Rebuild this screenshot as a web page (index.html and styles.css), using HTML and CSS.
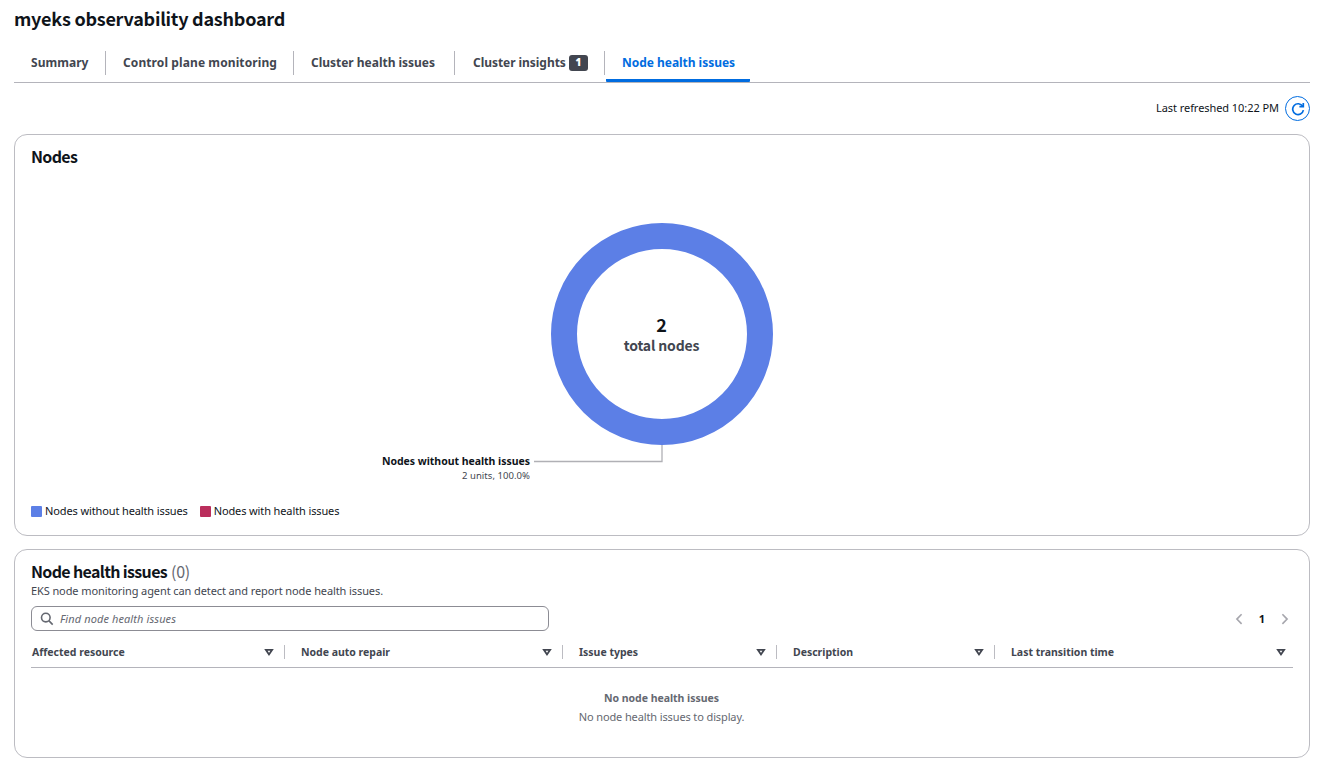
FILE: index.html
```html
<!DOCTYPE html>
<html lang="en">
<head>
    <meta charset="UTF-8">
    <meta name="viewport" content="width=device-width, initial-scale=1.0">
    <title>myeks observability dashboard</title>
    <link rel="stylesheet" href="styles.css">
</head>
<body>
    <main class="page">
        <h1 class="title">myeks observability dashboard</h1>

        <nav class="tabs">
            <a class="tab tab-summary">Summary</a>
            <a class="tab tab-control">Control plane monitoring</a>
            <a class="tab tab-cluster">Cluster health issues</a>
            <a class="tab tab-insights"><span>Cluster insights</span><b class="badge">1</b></a>
            <a class="tab tab-nodes">Node health issues</a>
        </nav>

        <div class="refresh">
            <span class="refresh-text">Last refreshed 10:22 PM</span>
            <button class="refresh-button" aria-label="Refresh">
                <svg width="14" height="14" viewBox="0 0 14 14">
                    <path d="M12.4 8.2A5.4 5.4 0 1 1 11.7 4.3" />
                    <path d="M12.3 0.9V4.7H8.4" />
                </svg>
            </button>
        </div>

        <section class="card nodes-card">
            <h2 class="card-title">Nodes</h2>
            <div class="chart">
                <svg class="donut" width="224" height="242" viewBox="0 0 224 242">
                    <circle cx="112" cy="112" r="98" />
                    <path d="M112 223V239.5H-16" />
                </svg>
                <div class="donut-center">
                    <strong class="total">2</strong>
                    <span class="total-label">total nodes</span>
                </div>
                <div class="donut-label">
                    <strong>Nodes without health issues</strong>
                    <span class="label-value">2 units, 100.0%</span>
                </div>
            </div>
            <div class="legend">
                <div class="legend-item"><i class="marker blue"></i><span>Nodes without health issues</span></div>
                <div class="legend-item"><i class="marker red"></i><span>Nodes with health issues</span></div>
            </div>
        </section>

        <section class="card issues-card">
            <h2 class="card-title">Node health issues <span class="count">(0)</span></h2>
            <p class="description">EKS node monitoring agent can detect and report node health issues.</p>
            <div class="tools">
                <div class="search">
                    <svg width="14" height="14" viewBox="0 0 14 14">
                        <circle cx="5.8" cy="5.6" r="4.3" />
                        <path d="M9 8.9L12.7 12.6" />
                    </svg>
                    <span>Find node health issues</span>
                </div>
                <div class="pagination">
                    <svg width="8" height="12" viewBox="0 0 8 12"><path d="M6.6 1.3L1.9 6.1L6.6 10.9" /></svg>
                    <span>1</span>
                    <svg width="8" height="12" viewBox="0 0 8 12"><path d="M1.4 1.3L6.1 6.1L1.4 10.9" /></svg>
                </div>
            </div>
            <div class="table-head">
                <div class="th">Affected resource<svg width="10" height="8" viewBox="0 0 10 8"><path d="M1.9 1.8H8.1L5 6.4Z" /></svg></div>
                <div class="th">Node auto repair<svg width="10" height="8" viewBox="0 0 10 8"><path d="M1.9 1.8H8.1L5 6.4Z" /></svg></div>
                <div class="th">Issue types<svg width="10" height="8" viewBox="0 0 10 8"><path d="M1.9 1.8H8.1L5 6.4Z" /></svg></div>
                <div class="th">Description<svg width="10" height="8" viewBox="0 0 10 8"><path d="M1.9 1.8H8.1L5 6.4Z" /></svg></div>
                <div class="th">Last transition time<svg width="10" height="8" viewBox="0 0 10 8"><path d="M1.9 1.8H8.1L5 6.4Z" /></svg></div>
            </div>
            <div class="empty">
                <strong>No node health issues</strong>
                <span>No node health issues to display.</span>
            </div>
        </section>
    </main>
</body>
</html>
```
FILE: styles.css
```css
* {
    box-sizing: border-box;
}
body {
    margin: 0;
    background: #fff;
    color: #0f141a;
    font-family: "Noto Sans", "Open Sans", sans-serif;
    font-size: 11px;
    letter-spacing: -0.12px;
    overflow: hidden;
}
h1, h2, .total, .total-label {
    font-family: "Noto Sans CJK JP", "Noto Sans", sans-serif;
    font-weight: 700;
}
.page {
    width: 1296px;
    margin-left: 14px;
}
.title {
    margin: 0;
    height: 44px;
    font-size: 18px;
    line-height: 36px;
    letter-spacing: -0.24px;
}
.tabs {
    display: flex;
    height: 39px;
    border-bottom: 1px solid #b4b4bb;
}
.tab {
    position: relative;
    height: 38px;
    padding-left: 17px;
    font-size: 12px;
    font-weight: 700;
    line-height: 37px;
    letter-spacing: 0.04px;
    color: #424650;
    white-space: nowrap;
}
.tab:not(:last-child)::after {
    content: "";
    position: absolute;
    right: 0;
    top: 7px;
    width: 1px;
    height: 24px;
    background: #b4b4bb;
}
.tab-summary {
    width: 92px;
}
.tab-control {
    width: 188px;
    letter-spacing: 0.1px;
}
.tab-cluster {
    width: 161px;
    letter-spacing: -0.02px;
}
.tab-insights {
    display: flex;
    align-items: center;
    width: 150px;
    padding-left: 18px;
    letter-spacing: -0.05px;
}
.tab-insights span {
    width: 96px;
    margin-top: -2px;
}
.badge {
    width: 19px;
    height: 16px;
    border-radius: 3px;
    background: #424650;
    color: #fff;
    font-size: 10px;
    line-height: 15px;
    text-align: center;
}
.tab-nodes {
    width: 144px;
    margin-left: 1px;
    padding-left: 16px;
    letter-spacing: -0.03px;
    color: #006ce0;
    border-bottom: 3px solid #006ce0;
    border-radius: 1px;
}
.refresh {
    display: flex;
    justify-content: flex-end;
    align-items: center;
    height: 51px;
    gap: 6px;
}
.refresh-text {
    padding-bottom: 2px;
    letter-spacing: -0.06px;
}
.refresh-button {
    display: flex;
    align-items: center;
    justify-content: center;
    width: 25px;
    height: 25px;
    padding: 0;
    border: 1px solid #006ce0;
    border-radius: 50%;
    background: #fff;
}
.refresh-button path {
    fill: none;
    stroke: #006ce0;
    stroke-width: 1.7;
}
.card {
    border: 1px solid #bcbcc2;
    border-radius: 13px;
    padding: 10px 16px 0;
}
.card-title {
    margin: 0;
    font-size: 16px;
    line-height: 22px;
    letter-spacing: -0.65px;
}
.nodes-card {
    height: 402px;
}
.chart {
    position: relative;
    height: 332px;
    padding-top: 55px;
}
.donut {
    display: block;
    margin: 0 auto;
    overflow: visible;
}
.donut circle {
    fill: none;
    stroke: #5c7fe6;
    stroke-width: 26;
}
.donut path {
    fill: none;
    stroke: #b0b0b5;
    stroke-width: 1.3;
}
.donut-center {
    position: absolute;
    left: 0;
    right: 1px;
    top: 146px;
    display: flex;
    flex-direction: column;
    align-items: center;
}
.total {
    font-size: 18px;
    line-height: 22px;
}
.total-label {
    font-size: 14px;
    line-height: 20px;
    letter-spacing: -0.15px;
    color: #424650;
}
.donut-label {
    position: absolute;
    right: 763px;
    top: 287px;
    display: flex;
    flex-direction: column;
    align-items: flex-end;
    line-height: 14px;
}
.donut-label strong {
    font-size: 10.5px;
    line-height: 15px;
    letter-spacing: -0.03px;
}
.label-value {
    font-size: 9.5px;
    letter-spacing: 0.05px;
    color: #424650;
}
.legend {
    display: flex;
    gap: 12px;
    height: 22px;
    align-items: center;
    margin-top: 1px;
}
.legend-item {
    display: flex;
    align-items: center;
    gap: 3px;
}
.legend-item span {
    padding-bottom: 2px;
}
.marker {
    width: 11px;
    height: 11px;
    border-radius: 1px;
}
.blue {
    background: #5c7fe6;
}
.red {
    background: #ba2e5c;
}
.issues-card {
    height: 209px;
    margin-top: 13px;
}
.count {
    margin-left: 1px;
    font-weight: 400;
    letter-spacing: -0.3px;
    color: #656871;
}
.description {
    margin: 1px 0 0;
    line-height: 16px;
    letter-spacing: -0.1px;
    color: #424650;
}
.tools {
    display: flex;
    justify-content: space-between;
    align-items: center;
    margin-top: 7px;
}
.search {
    display: flex;
    align-items: center;
    gap: 6px;
    width: 518px;
    height: 25px;
    padding-left: 8px;
    border: 1px solid #8c8c94;
    border-radius: 6px;
    color: #656871;
    font-style: italic;
    letter-spacing: 0.1px;
}
.search svg {
    fill: none;
    stroke: #656871;
    stroke-width: 1.6;
}
.pagination {
    display: flex;
    align-items: center;
    padding-right: 4px;
    gap: 16px;
    font-weight: 700;
}
.pagination svg {
    fill: none;
    stroke: #a6a6ad;
    stroke-width: 1.6;
}
.table-head {
    display: grid;
    grid-template-columns: 254px 278px 214px 218px 298px;
    height: 37px;
    border-bottom: 1px solid #b4b4bb;
}
.th {
    position: relative;
    display: flex;
    align-items: center;
    justify-content: space-between;
    height: 42px;
    padding: 0 11px 0 16px;
    font-size: 10.5px;
    font-weight: 700;
    letter-spacing: -0.01px;
    color: #424650;
}
.th:first-child {
    padding-left: 1px;
}
.th:last-child {
    padding-right: 7px;
}
.th:not(:last-child)::after {
    content: "";
    position: absolute;
    right: 0;
    top: 14px;
    width: 1px;
    height: 14px;
    background: #bcbcc2;
}
.th svg {
    fill: none;
    stroke: #424650;
    stroke-width: 1.8;
}
.empty {
    display: flex;
    flex-direction: column;
    align-items: center;
    padding: 21px 1px 0 0;
    line-height: 19px;
    color: #656871;
}
.empty strong {
    font-size: 10.5px;
    letter-spacing: -0.03px;
}
.empty span {
    margin-top: -1px;
}
```
